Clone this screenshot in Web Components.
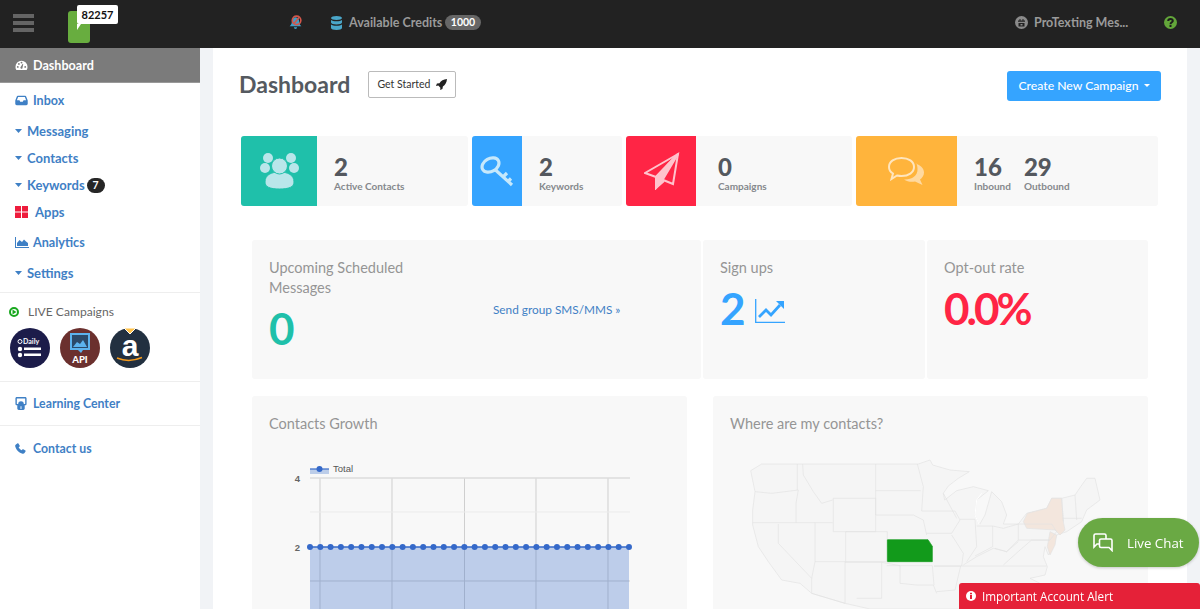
<!DOCTYPE html>
<html lang="en"><head><meta charset="utf-8"><title>Dashboard</title>
<style>
html,body{margin:0;height:609px;overflow:hidden;background:#f1f3f6;font-family:Lato,"Liberation Sans",sans-serif}
app-shell{height:609px}
</style></head><body>
<app-shell>
  <top-bar slot="top"></top-bar>
  <side-nav slot="side">
    <nav-item active style="height:35px;font-size:12.600px" icon="gauge">Dashboard</nav-item>
    <nav-item style="height:34px;font-size:12.500px" icon="inbox">Inbox</nav-item>
    <nav-item style="height:28px" icon="caret">Messaging</nav-item>
    <nav-item style="height:26px" icon="caret">Contacts</nav-item>
    <nav-item style="height:28px" icon="caret" badge="7">Keywords</nav-item>
    <nav-item style="height:26px" icon="apps">Apps</nav-item>
    <nav-item style="height:34px;font-size:12.600px" icon="chart">Analytics</nav-item>
    <nav-item style="height:28px" icon="caret">Settings</nav-item>
    <live-campaigns></live-campaigns>
    <nav-item style="height:44px;border-bottom:1px solid #eee;font-size:12.300px" icon="learn">Learning Center</nav-item>
    <nav-item style="height:45px;font-size:12.300px" icon="phone">Contact us</nav-item>
  </side-nav>
  <dash-board slot="main"></dash-board>
</app-shell>
<live-chat></live-chat>
<alert-bar>Important Account Alert</alert-bar>

<script>
function def(name, html, init){
  customElements.define(name, class extends HTMLElement{
    connectedCallback(){
      if(this.shadowRoot) return;
      const r=this.attachShadow({mode:'open'});
      r.innerHTML=typeof html==='function'?html(this):html;
      if(init) init(r,this);
    }
  });
}
const ICONS={
 gauge:'<svg width="13" height="13" viewBox="0 0 14 14"><path fill="currentColor" fill-rule="evenodd" d="M7 2a6.500 6.500 0 0 0-6.500 6.500c0 1.300.4 2.400 1 3.300h11c.6-.9 1-2 1-3.300A6.500 6.500 0 0 0 7 2zM3 9.500a1 1 0 1 1 0-2 1 1 0 0 1 0 2zm1.200-3.200a1 1 0 1 1 0-2 1 1 0 0 1 0 2zM7 4.900a1 1 0 1 1 0-2 1 1 0 0 1 0 2zm.9 5.400a1.300 1.300 0 0 1-2-1.500l2.400-3.600.6.3zM11 9.500a1 1 0 1 1 0-2 1 1 0 0 1 0 2z"/></svg>',
 inbox:'<svg width="13" height="11" viewBox="0 0 14 12"><path fill="currentColor" fill-rule="evenodd" d="M3 .8h8c.5 0 .9.3 1.100.7L13.800 6v3.600c0 .9-.7 1.600-1.600 1.600H1.800C.9 11.200.2 10.500.2 9.600V6L1.900 1.500C2.100 1.100 2.500.8 3 .8zM3.300 2.300 2 5.800h2.800l.8 1.500h2.800l.8-1.500H12l-1.300-3.500z"/></svg>',
 caret:'<svg width="7" height="4" viewBox="0 0 7 4"><path fill="currentColor" d="M0 0h7L3.500 4z"/></svg>',
 apps:'<svg width="13" height="12" viewBox="0 0 13 12"><path fill="#ee1c3c" d="M0 0h6v5.500H0zM7 0h6v5.500H7zM0 6.500h6V12H0zM7 6.500h6V12H7z"/></svg>',
 chart:'<svg width="14" height="11" viewBox="0 0 14 11"><path fill="currentColor" d="M0 0h1v10h13v1H0z"/><path fill="currentColor" d="M2 9V6l2.500-3L7 5l2-2.500 2 2 2 1.500v3z"/></svg>',
 learn:'<svg width="12" height="13" viewBox="0 0 12 14"><path fill="currentColor" fill-rule="evenodd" d="M1.500 0h9C11.300 0 12 .7 12 1.500v6C12 8.300 11.300 9 10.500 9H10v3.500c0 .8-.7 1.500-1.500 1.500h-5C2.700 14 2 13.300 2 12.500V9h-.5C.7 9 0 8.300 0 7.500v-6C0 .7.700 0 1.500 0zM1.500 1.500v6H3a3 3 0 0 1 6 0h1.500v-6z"/><path fill="#fff" d="M5.500 10h1v3h-1z"/></svg>',
 phone:'<svg width="11" height="11" viewBox="0 0 12 12"><path fill="currentColor" d="M2.800.3 1 1.500C.3 2 0 2.800.2 3.600c.5 2 1.500 3.700 2.900 5.200 1.500 1.400 3.200 2.400 5.200 2.900.8.200 1.600-.1 2.100-.8l1.200-1.800c.2-.3.100-.7-.2-.9L9 6.800c-.3-.2-.6-.1-.8.100l-.9 1.100C5.900 7.300 4.700 6.100 4 4.700l1.100-.9c.2-.2.300-.5.100-.8L3.700.5C3.500.2 3.100.1 2.800.3z"/></svg>'
};

def('app-shell',`<style>
:host{display:grid;grid-template-columns:200px 1fr;grid-template-rows:48px 1fr;height:609px;overflow:hidden}
.t{grid-column:1/3}.s{display:block;background:#fff;min-height:0}
.m{margin:0 13px;background:#fff;overflow:hidden;min-height:0}
</style><div class="t"><slot name="top"></slot></div><div class="s"><slot name="side"></slot></div><div class="m"><slot name="main"></slot></div>`);

def('top-bar',`<style>
:host{display:flex;align-items:center;height:48px;background:#222;color:#9a9a9a;font:700 12.500px Lato,sans-serif;position:relative}
.burger{display:flex;flex-direction:column;gap:3px;width:21px;margin:-2px 0 0 13px}
.burger i{display:block;height:4px;background:#656565}
.logo{position:relative;width:22px;height:32px;margin:6px 0 0 34px;background:#68ad3f;border-radius:3px}
.bub{position:absolute;left:9px;top:-6px;width:41px;height:19px;background:#fff;border-radius:2px;color:#111;font:700 11px/19px Lato,sans-serif;text-align:center}
.tail{position:absolute;left:9px;top:13px;width:0;height:0;border-left:4px solid #fff;border-bottom:6px solid transparent}
.bell{margin-left:198px;margin-top:-4px}
.db{margin-left:28px;margin-top:-3px}
.cred{margin-left:7px;margin-top:-3px;width:93px;white-space:nowrap}
.pill{margin-left:3px;margin-top:-3px;width:36px;height:15px;border-radius:8px;background:#666;color:#fff;font:700 10.500px/15px Lato,sans-serif;text-align:center}
.sp{flex:1}
.who{margin:-3px 0 0 6px;width:94px;white-space:nowrap}
.glob{margin-top:-3px}
.help{margin:-3px 23px 0 36px}
</style>
<div class="burger"><i></i><i></i><i></i></div>
<div class="logo"><div class="bub">82257</div><div class="tail"></div></div>
<svg class="bell" width="15" height="15" viewBox="0 0 14 14"><path fill="#3f9fc8" d="M7 2c2.500 0 3.500 2 3.500 4.500 0 2 1 3 2 4H1.500c1-1 2-2 2-4C3.500 4 4.500 2 7 2zM5.500 11.500h3a1.500 1.500 0 0 1-3 0z"/><circle cx="8" cy="5" r="4" fill="none" stroke="#d4574b" stroke-width="1.500"/><path d="M5.500 8 10.500 2" stroke="#d4574b" stroke-width="1.500"/></svg>
<svg class="db" width="11" height="14" viewBox="0 0 11 14"><path fill="#4aa6c9" d="M5.500 0C8.500 0 11 .8 11 2s-2.500 2-5.500 2S0 3.200 0 2 2.500 0 5.500 0zM0 4c1 .9 3 1.300 5.500 1.300S10 4.900 11 4v2.500c0 1.100-2.500 2-5.500 2S0 7.600 0 6.500zM0 8.500c1 .9 3 1.300 5.500 1.300S10 9.400 11 8.500V12c0 1.100-2.500 2-5.500 2S0 13.100 0 12z"/></svg>
<span class="cred">Available Credits</span><span class="pill">1000</span>
<span class="sp"></span>
<svg class="glob" width="13" height="13" viewBox="0 0 13 13"><circle cx="6.500" cy="6.500" r="6.500" fill="#8b8b8b"/><path fill="#222" d="M4.500 3h1v1.500h2V3h1v1.500H10v1.200H3V4.500h1.500zM3.500 7h6v3.500h-6zM5.500 8v1.500h2V8z"/></svg>
<span class="who">ProTexting Mes...</span>
<svg class="help" width="13" height="13" viewBox="0 0 13 13"><circle cx="6.500" cy="6.500" r="6.500" fill="#63a63a"/><path fill="none" stroke="#1d1d1d" stroke-width="2" d="M4.200 5c0-1.200 1-1.900 2.300-1.900S8.800 3.800 8.800 5 6.500 6.400 6.500 8.200"/><rect x="5.500" y="9" width="2" height="2" fill="#1d1d1d"/></svg>`);

def('side-nav',`<style>
:host{display:block;background:#fff;font:700 13px Lato,sans-serif;color:#3f80c5}
</style><slot></slot>`);

def('nav-item',h=>{
 const ic=h.getAttribute('icon');
 const tx={caret:27,apps:35}[ic]||33;
 const b=h.getAttribute('badge');
 return `<style>
:host{display:flex;align-items:center;box-sizing:border-box;color:#3f80c5;padding-left:15px;white-space:nowrap}
:host([active]){background:#7b7b7b;color:#fff;border-bottom:1px solid #999}
.i{width:${tx-15}px;display:flex;align-items:center;flex:none}
.b{display:inline-block;width:18px;height:15px;margin-left:2px;border-radius:8px;background:#262626;color:#fff;font:700 10.500px/15px Lato,sans-serif;text-align:center}
</style><span class="i">${ICONS[ic]}</span><slot></slot>${b?`<span class="b">${b}</span>`:''}`;
});

def('live-campaigns',`<style>
:host{display:block;margin-top:5px;padding:11px 0 14px 9px;border-top:1px solid #eee;border-bottom:1px solid #eee;box-sizing:border-box;height:90px}
.h{display:flex;align-items:center;gap:9px;font:400 12.100px/16px Lato,sans-serif;color:#666}
.r{display:flex;gap:10px;margin:8px 0 0 1px}
svg{display:block}
text{font-family:Lato,sans-serif;font-weight:900}
</style>
<div class="h"><svg width="10" height="10" viewBox="0 0 10 10"><circle cx="5" cy="5" r="4" fill="none" stroke="#19a81f" stroke-width="2"/><path d="M3.500 2.500v5L7.500 5z" fill="#19a81f"/></svg>LIVE Campaigns</div>
<div class="r">
<svg width="40" height="40" viewBox="0 0 40 40"><circle cx="20" cy="20" r="20" fill="#1c1c4a"/><circle cx="10" cy="13.500" r="2" fill="none" stroke="#fff"/><text x="13" y="16" font-size="7" fill="#e8e8f0">Daily</text><circle cx="10" cy="21" r="2.200" fill="#fff"/><rect x="14" y="19.500" width="17" height="2.500" fill="#fff"/><circle cx="10" cy="27" r="2.200" fill="#fff"/><rect x="14" y="25.500" width="17" height="2.500" fill="#fff"/></svg>
<svg width="40" height="40" viewBox="0 0 40 40"><circle cx="20" cy="20" r="20" fill="#6b302e"/><rect x="11" y="6" width="18" height="15" fill="#2b4a6a" stroke="#5cb3ee" stroke-width="2"/><path d="M13 19l4-5 3 2 3-4 4 7z" fill="#5cb3ee"/><path d="M18 22h5l-2 3z" fill="#5cb3ee"/><text x="20" y="35" text-anchor="middle" font-size="9.500" fill="#fff">API</text></svg>
<svg width="40" height="40" viewBox="0 0 40 40"><circle cx="20" cy="20" r="20" fill="#223040"/><path d="M14 0h12l-6 6z" fill="#ffc24a" stroke="#fff"/><text x="20" y="28" text-anchor="middle" font-size="30" fill="#fff" style="font-family:'Liberation Sans',sans-serif;font-weight:700">a</text><path d="M7 30q12 5 25-.5" fill="none" stroke="#f79c1c" stroke-width="1.500"/></svg>
</div>`);

def('stat-card',h=>`<style>
:host{display:flex;height:70px;background:#f8f8f8;border-radius:3px;overflow:hidden}
.ic{flex:none;display:flex;align-items:center;justify-content:center;background:var(--c);width:var(--w)}
.b{display:flex;gap:13px;padding:19px 0 0 var(--p,17px)}
</style><div class="ic"><slot name="icon"></slot></div><div class="b"><slot></slot></div>`);

def('stat-num',h=>`<style>
:host{display:block;color:#85888c;font:700 10px/12px Lato,sans-serif;white-space:nowrap}
b{display:block;color:#54585e;font:900 24px/24px Lato,sans-serif;margin-bottom:1px}
</style><b>${h.getAttribute('n')}</b><slot></slot>`);

def('metric-panel',h=>`<style>
:host{display:block;position:relative;background:#f8f8f8;box-sizing:border-box;padding:18px 17px;height:139px;border-radius:3px;color:#959595;font:400 14.500px/20px Lato,sans-serif}
.n{font:700 44px/50px Lato,sans-serif;color:var(--n);display:flex;align-items:center;gap:9px;margin-top:var(--g,1px);letter-spacing:var(--ls,0)}
</style><slot></slot><div class="n">${h.getAttribute('n')}<slot name="extra"></slot></div>`);

def('us-map',`<style>:host{display:block}svg{display:block}</style>
<svg width="435" height="159" viewBox="9 0 1305 477" fill="none" stroke="#e2e2e2" stroke-width="2">
<path fill="#f5f5f5" d="M122 62l33-20h470l35-12 8 15 52 15 58 5-33 20-30 23-15 22 4 20 36-28 50-12 45 12-35 28-5 45 13 30 17-30 20-70 30 30 15 40-10 27h45l25-32 60-15 15-30h30l40-10 17-25 18-25h25l15 65-40 30-15 35-45 30-30 10-10 30-15 30-10-25-5 30 12 30-7 25-45 10 30 15 40 77H480l-75-17-100-30-35-30-55-10-40-55-30-45-17-65v-45l7-55z"/>
<path fill="#f3e6dd" d="M940 215l12-25 58-15 15-30h30l5 70 5 25-15 15-15-15-85-5zM1020 245l20 10-5 30-15 30-8-25z"/>
<path fill="#129a1b" stroke="#129a1b" d="M532 269h122l8 12 5 8v46H532z"/>
<path d="M135 125l50 5 80-10M262 42v78M278 42l2 33 30 50 25 35 33-10M265 120l-7 40v58M128 218h240M497 42v153M370 145h127v100H370zM497 122h135M497 195h113l30 15 10 45M532 268V245H407v90h125M315 218v117h92M205 222v58l100 105M315 335l-10 50v45l100 30V335M405 337h110v108h-75M515 337l55 10v53l50 5h50l10 25M530 347h137l5 58M622 42l18 68-5 73M635 183h100l15 27-25 40h-75M725 255l35 55-5 38h-83M672 348h80l-17 72-55 5M700 130l40 75M750 208h45l5 82-30 45M800 228h48v62l-53 28M848 228l32 7 45-13v48l-35 35-35-10M760 345l40-25 50-25 40 10 35-30M755 348h255M880 345l50-45 35-30h55M925 222h100l15 23-20 25h-95M1055 145l5 70M1095 135l5 75M1060 205h55"/>
<path d="M800 150l-5 45 13 30M815 130l-15 20" stroke="#fff" stroke-width="3"/>
</svg>`);

def('growth-chart',()=>{
 let dots='';
 for(let i=0;i<32;i++){dots+=`<circle cx="${58+i*10.29}" cy="97" r="3" fill="#3569c9"/>`;}
 const v=[68,140,212.500,284,356].map(x=>`M${x} 28V159`).join('');
 return `<style>:host{display:block}svg{display:block}text{font-family:"Liberation Sans",sans-serif;font-size:9.500px}</style>
<svg width="435" height="159" viewBox="0 0 435 159">
<path d="${v}" stroke="#cfcfcf" stroke-width="1"/>
<path d="M58 28h320" stroke="#dcdcdc" stroke-width="1.500"/><path d="M58 62h320" stroke="#ebebeb"/><path d="M58 131h320" stroke="#cfcfcf"/>
<rect x="58" y="97" width="319" height="62" fill="#3569c9" opacity=".3"/>
<rect x="58" y="19" width="19" height="5" fill="#bccde9"/><path d="M58 19h19" stroke="#3569c9" stroke-width="1.200"/><circle cx="67.500" cy="19" r="3" fill="#3569c9"/>
<text x="81" y="22" fill="#555">Total</text>
<text x="48" y="31.500" text-anchor="end" fill="#666" font-weight="700">4</text>
<text x="48" y="100.500" text-anchor="end" fill="#666" font-weight="700">2</text>
<path d="M58 97h319" stroke="#3569c9" stroke-width="1.500"/>${dots}</svg>`;
});

def('chart-panel',h=>`<style>
:host{display:block;background:#f8f8f8;box-sizing:border-box;height:300px;border-radius:3px;color:#959595;font:400 14.500px/20px Lato,sans-serif}
.t{padding:18px 17px 0;height:36px}
</style><div class="t">${h.getAttribute('t')}</div><slot></slot>`);

def('dash-board',`<style>
:host{display:block;padding-top:23px;color:#54585e;font-family:Lato,sans-serif}
.head{display:flex;align-items:flex-start;padding:0 26px;height:30px;margin-bottom:35px}
h1{margin:0;font:700 23px/26px Lato,sans-serif;color:#555a60;width:129px}
.gs{display:flex;align-items:center;gap:5px;box-sizing:border-box;width:88px;height:27px;padding-bottom:1px;justify-content:center;border:1px solid #bbb;border-radius:2px;background:#fff;font:400 10.500px Lato,sans-serif;color:#333}
.cn{margin-left:auto;display:flex;align-items:center;justify-content:center;gap:5px;width:154px;height:30px;padding-bottom:2px;box-sizing:border-box;border-radius:3px;background:#35a4ff;color:#fff;font:500 12.200px Lato,sans-serif}
.cn i{width:0;height:0;border:3.500px solid transparent;border-top-color:#fff;border-bottom:0}
.stats{display:grid;grid-template-columns:227px 150px 226px 302px;gap:4px;margin:0 0 34px 28px}
.mid{display:grid;grid-template-columns:449px 222px 221px;gap:2px;margin:0 0 17px 39px}
.low{display:grid;grid-template-columns:435px 435px;gap:26px;margin-left:39px}
.lead{display:block;width:160px}
.send{position:absolute;left:241px;top:60px;font:400 11.800px/20px Lato,sans-serif;color:#3f80c5;white-space:nowrap}
</style>
<div class="head"><h1>Dashboard</h1>
<div class="gs">Get Started <svg width="11" height="11" viewBox="0 0 12 12"><path fill="#222" d="M12 0C8 .3 5.500 2 3.800 4.500L1 5 0 7.500l2.500-.3 2.300 2.300L4.500 12 7 11l.5-2.800C10 6.500 11.700 4 12 0z"/></svg></div>
<div class="cn">Create New Campaign <i></i></div></div>
<div class="stats">
<stat-card style="--c:#1fc0aa;--w:76px"><svg slot="icon" width="39" height="38" viewBox="0 0 39 38" fill="#b9e6ea"><circle cx="8" cy="6" r="5"/><circle cx="31" cy="6" r="5"/><circle cx="5" cy="16" r="5"/><circle cx="34" cy="16" r="5"/><path d="M5 30c0-7 6-10 14.500-10S34 23 34 30c0 5-5 7-14.500 7S5 35 5 30z" stroke="#1fc0aa"/><circle cx="19.500" cy="14" r="8" stroke="#1fc0aa"/></svg><stat-num n="2">Active Contacts</stat-num></stat-card>
<stat-card style="--c:#35a4ff;--w:50px"><svg slot="icon" width="34" height="32" viewBox="0 0 34 32" fill="none" stroke="#c6e8fb" stroke-width="3.200"><ellipse cx="10.500" cy="10" rx="9" ry="6.500" transform="rotate(-30 10.500 10)"/><path d="M15.500 15 32 30M23 22l4-4M28 26.500l3-3"/></svg><stat-num n="2">Keywords</stat-num></stat-card>
<stat-card style="--c:#ff2545;--w:70px;--p:22px"><svg slot="icon" width="36" height="38" viewBox="0 0 36 38" fill="none" stroke="#ffc3cc" stroke-width="2" style="margin-left:2px"><path d="M34 2 1 21l11 4 17 7z"/><path d="M34 2 12 25l0 11 8-7" /><path fill="#ffc3cc" d="M34 2 12 25l0 11 6-7z"/></svg><stat-num n="0">Campaigns</stat-num></stat-card>
<stat-card style="--c:#ffb43c;--w:101px"><svg slot="icon" width="37" height="29" viewBox="0 0 37 29" fill="none" stroke="#ffe5bd" stroke-width="2"><path d="M13.500 1C20.500 1 26 4.500 26 10s-5.500 9-12.500 9c-1.500 0-3-.2-4.500-.5L3.500 22 5 16.500C2.500 15 1 12.800 1 10 1 4.500 6.500 1 13.500 1z"/><path fill="#ffd9a0" stroke="none" d="M27.500 6.500C32.500 8 36 11.500 36 15.500c0 3-1.800 5.500-4 7l2.500 5.500-7.500-3.500c-4 .8-8 0-11-2 7 .5 14-3.500 13.500-10.500 0-2-.5-4-1-5.500z"/></svg><stat-num n="16">Inbound</stat-num><stat-num n="29">Outbound</stat-num></stat-card>
</div>
<div class="mid">
<metric-panel n="0" style="--n:#1fc0aa;--g:5px"><span class="lead">Upcoming Scheduled Messages</span><span class="send">Send group SMS/MMS »</span></metric-panel>
<metric-panel n="2" style="--n:#35a4ff;--g:5px">Sign ups<svg slot="extra" width="30" height="24" viewBox="0 0 30 24" fill="none" stroke="#35a4ff" style="margin-top:6px"><path stroke-width="1.300" d="M.7 0v23.300H30"/><path stroke-width="2.800" d="M4 18l7-7 5 5 9-10"/><path fill="#35a4ff" stroke="none" d="M21 2h8v8z"/></svg></metric-panel>
<metric-panel n="0.0%" style="--n:#ff2545;--g:5px;--ls:-3px">Opt-out rate</metric-panel>
</div>
<div class="low">
<chart-panel t="Contacts Growth"><growth-chart></growth-chart></chart-panel>
<chart-panel t="Where are my contacts?"><us-map></us-map></chart-panel>
</div>`);

def('live-chat',`<style>
:host{position:fixed;left:1078px;top:518px;width:121px;height:49px;display:flex;align-items:center;gap:14px;padding-left:15px;box-sizing:border-box;background:#6aa944;border-radius:25px;color:#fff;font:500 13.300px "Open Sans",Lato,sans-serif;box-shadow:0 1px 3px rgba(0,0,0,.2);white-space:nowrap}
</style><svg width="20" height="19" viewBox="0 0 20 19" fill="none" stroke="#fff" stroke-width="1.600"><path d="M13 6V2.500C13 1.700 12.300 1 11.500 1h-9C1.700 1 1 1.700 1 2.500V14l3-3h2.500"/><path d="M8 6h9.500c.8 0 1.500.7 1.500 1.500v10l-3-3H8c-.8 0-1.500-.7-1.500-1.500V7.500C6.500 6.700 7.200 6 8 6z"/></svg>Live Chat`);

def('alert-bar',`<style>
:host{position:fixed;left:959px;top:583px;width:241px;height:26px;box-sizing:border-box;padding-left:7px;display:flex;align-items:center;gap:6px;background:#e52138;border-radius:3px 3px 0 0;color:#fff;font:500 11.700px "Open Sans",Lato,sans-serif}
</style><svg width="10" height="10" viewBox="0 0 10 10"><circle cx="5" cy="5" r="5" fill="#fff"/><rect x="4" y="4" width="2" height="4" fill="#e52138"/><rect x="4" y="1.800" width="2" height="1.500" fill="#e52138"/></svg><slot></slot>`);
</script>
</body></html>
